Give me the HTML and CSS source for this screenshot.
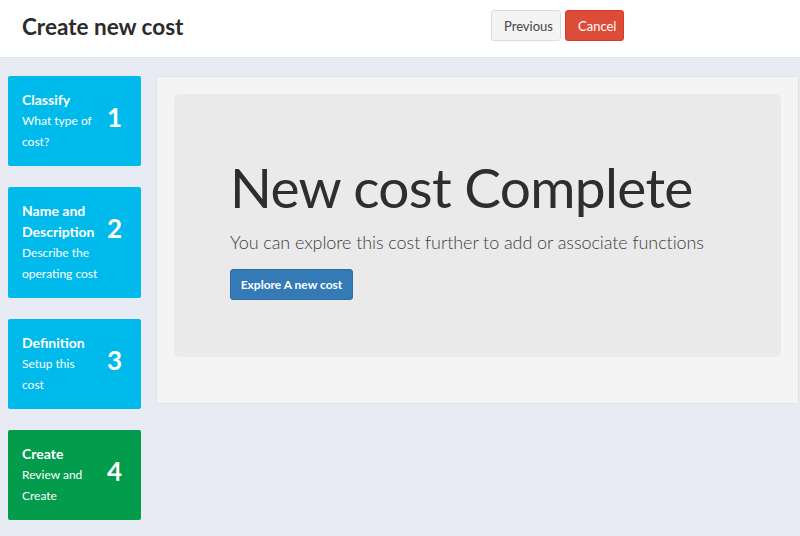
FILE: index.html
```html
<!DOCTYPE html>
<html lang="en">
<head>
<meta charset="utf-8">
<title>Create new cost</title>
<link rel="stylesheet" href="styles.css">
</head>
<body>
<header class="topbar">
  <h1 class="page-title">Create new cost</h1>
  <div class="actions">
    <button class="btn btn-default">Previous</button>
    <button class="btn btn-danger">Cancel</button>
  </div>
</header>
<main class="content">
  <nav class="steps">
    <div class="step step-info">
      <div class="step-text">
        <div class="step-title">Classify</div>
        <div class="step-sub">What type of cost?</div>
      </div>
      <div class="step-num">1</div>
    </div>
    <div class="step step-info">
      <div class="step-text">
        <div class="step-title">Name and Description</div>
        <div class="step-sub">Describe the operating cost</div>
      </div>
      <div class="step-num">2</div>
    </div>
    <div class="step step-info">
      <div class="step-text">
        <div class="step-title">Definition</div>
        <div class="step-sub">Setup this cost</div>
      </div>
      <div class="step-num">3</div>
    </div>
    <div class="step step-success">
      <div class="step-text">
        <div class="step-title">Create</div>
        <div class="step-sub">Review and Create</div>
      </div>
      <div class="step-num">4</div>
    </div>
  </nav>
  <section class="panel">
    <div class="jumbotron">
      <h2 class="jumbo-title">New cost Complete</h2>
      <p class="jumbo-lead">You can explore this cost further to add or associate functions</p>
      <button class="btn btn-primary">Explore A new cost</button>
    </div>
  </section>
</main>
</body>
</html>
```

FILE: styles.css
```css
* { box-sizing: border-box; }
html, body { margin: 0; padding: 0; }
body {
  width: 800px;
  height: 536px;
  overflow: hidden;
  background: #e8ebf3;
  font-family: Lato, "Open Sans", sans-serif;
  color: #333;
}
.topbar {
  height: 58px;
  background: #fff;
  border-bottom: 1px solid #dde1e9;
  display: flex;
  align-items: flex-start;
}
.page-title {
  margin: 0;
  width: 491px;
  padding: 12px 0 0 22px;
  font-size: 22.5px;
  font-weight: 700;
  color: #2b2b2b;
  line-height: 29px;
}
.actions {
  display: flex;
  gap: 4px;
  padding-top: 10px;
}
.btn {
  font-family: Lato, "Open Sans", sans-serif;
  height: 31px;
  padding: 0 12px;
  border-radius: 3px;
  border: 1px solid transparent;
  font-size: 13px;
  cursor: pointer;
}
.btn-default {
  width: 70px;
  background: #f4f4f4;
  border-color: #dcdcdc;
  color: #444;
}
.btn-danger {
  width: 59px;
  background: #dd4b39;
  border-color: #d73925;
  color: #fff;
}
.btn-primary {
  width: 123px;
  background: #337ab7;
  border-color: #2e6da4;
  color: #fff;
  font-size: 12px;
  font-weight: 700;
  padding: 0;
}
.content {
  display: flex;
  align-items: flex-start;
  gap: 15px;
  padding: 18px 1px 0 8px;
}
.steps {
  width: 133px;
  flex: 0 0 133px;
  display: flex;
  flex-direction: column;
  gap: 21px;
}
.step {
  display: flex;
  border-radius: 2px;
  padding: 13px 19px 14px 14px;
  color: #fff;
}
.step-info { background: #00baec; }
.step-success { background: #029c4c; }
.step-text { flex: 1; }
.step-title {
  font-size: 14px;
  font-weight: 700;
  line-height: 21px;
}
.step-sub {
  font-size: 12px;
  line-height: 21px;
  width: 76px;
}
.step-num {
  height: 55px;
  display: flex;
  align-items: center;
  font-size: 26px;
  font-weight: 700;
  line-height: 1;
}
.panel {
  flex: 1;
  background: #f4f4f4;
  border: 1px solid #e2e2e2;
  border-radius: 3px;
  padding: 17px 17px 46px;
}
.jumbotron {
  background: #eaeaea;
  border-radius: 6px;
  padding: 60px 56px 57px;
  height: 263px;
}
.jumbo-title {
  margin: 0;
  font-size: 55px;
  font-weight: 400;
  line-height: 66px;
  color: #2e2e2e;
  letter-spacing: -0.7px;
}
.jumbo-lead {
  margin: 10px 0 15px;
  font-size: 18px;
  font-weight: 300;
  line-height: 24px;
  color: #3e3e3e;
  letter-spacing: -0.08px;
}
```
